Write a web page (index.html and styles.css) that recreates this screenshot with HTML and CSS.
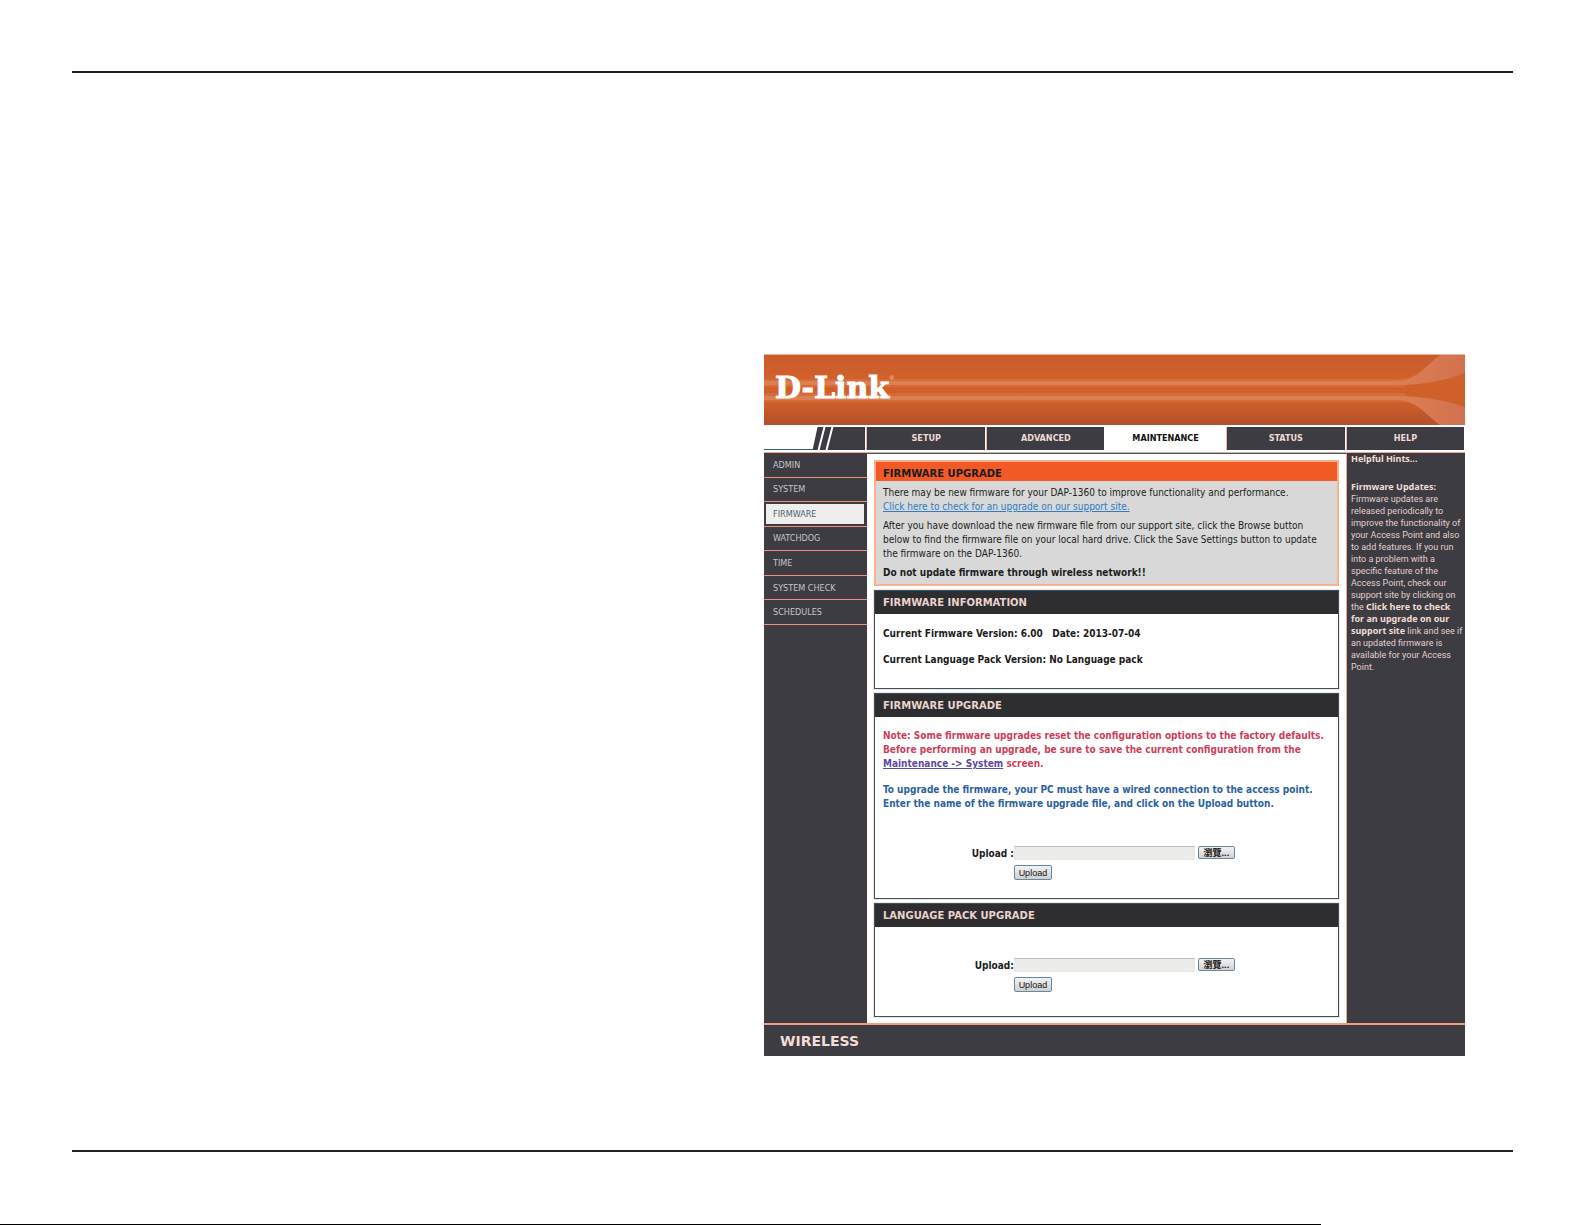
FILE: index.html
```html
<!DOCTYPE html>
<html lang="en">
<head>
  <meta charset="UTF-8">
  <meta name="viewport" content="width=device-width, initial-scale=1.0">
  <title>D-Link - Firmware Upgrade</title>
  <link rel="stylesheet" href="styles.css">
</head>
<body>
  <div class="sheet">
    <div class="panel">
      <header class="banner">
        <svg class="streaks" viewBox="0 0 701 70" preserveAspectRatio="none" aria-hidden="true">
          <defs>
            <linearGradient id="flare" x1="0" x2="1" y1="0" y2="0">
              <stop offset="0.9" stop-color="#dc8053"/>
              <stop offset="1" stop-color="#d2714f"/>
            </linearGradient>
          </defs>
          <path fill="#dc8053" opacity="0.4" d="M0 24H636C650 23 656 19 662 14L640 32H0ZM0 38H640L662 56C656 51 650 47 636 47H0Z"/>
          <path fill="url(#flare)" d="M0 26H632C652 26 660 12 676 0H701V18C680 26 660 30 632 30H0Z"/>
          <path fill="url(#flare)" d="M0 41H632C660 41 680 45 701 52V70H676C660 58 652 45 632 45H0Z"/>
        </svg>
        <div class="logo">D-Link<sup>®</sup></div>
      </header>
      <nav class="tabs">
        <div class="corner">
          <svg viewBox="0 0 102 23" preserveAspectRatio="none" aria-hidden="true">
            <path fill="#3d3c42" d="M54 0H102V23H49Z"/>
            <path stroke="#fff" stroke-width="2" d="M61 0L55 23M69 0L63 23"/>
            <path stroke="#2f5f73" d="M0 22.500H50"/>
          </svg>
        </div>
        <a href="#setup">SETUP</a>
        <a href="#advanced">ADVANCED</a>
        <a href="#maintenance" class="active">MAINTENANCE</a>
        <a href="#status">STATUS</a>
        <a href="#help">HELP</a>
      </nav>
      <div class="columns">
        <nav class="side">
          <ul>
            <li><a href="#admin">ADMIN</a></li>
            <li><a href="#system">SYSTEM</a></li>
            <li><a href="#firmware" class="active">FIRMWARE</a></li>
            <li><a href="#watchdog">WATCHDOG</a></li>
            <li><a href="#time">TIME</a></li>
            <li><a href="#check">SYSTEM CHECK</a></li>
            <li><a href="#schedules">SCHEDULES</a></li>
          </ul>
        </nav>
        <main>
          <section class="box intro">
            <h1>FIRMWARE UPGRADE</h1>
            <p>There may be new firmware for your DAP-1360 to improve functionality and performance.<br>
              <a href="#support">Click here to check for an upgrade on our support site.</a></p>
            <p>After you have download the new firmware file from our support site, click the Browse button<br>
              below to find the firmware file on your local hard drive. Click the Save Settings button to update<br>
              the firmware on the DAP-1360.</p>
            <p><b>Do not update firmware through wireless network!!</b></p>
          </section>
          <section class="box info">
            <h2>FIRMWARE INFORMATION</h2>
            <p>Current Firmware Version: 6.00 &nbsp; Date: 2013-07-04</p>
            <p>Current Language Pack Version: No Language pack</p>
          </section>
          <section class="box upgrade">
            <h2>FIRMWARE UPGRADE</h2>
            <p class="note">Note: Some firmware upgrades reset the configuration options to the factory defaults.<br>
              Before performing an upgrade, be sure to save the current configuration from the<br>
              <a href="#system">Maintenance -&gt; System</a> screen.</p>
            <p class="tip">To upgrade the firmware, your PC must have a wired connection to the access point.<br>
              Enter the name of the firmware upgrade file, and click on the Upload button.</p>
            <form class="upload">
              <label for="fwFile">Upload :</label>
              <div class="file">
                <input type="text" id="fwFile">
                <button type="button" class="browse">瀏覽...</button>
              </div>
              <button type="button" class="send">Upload</button>
            </form>
          </section>
          <section class="box language">
            <h2>LANGUAGE PACK UPGRADE</h2>
            <form class="upload">
              <label for="langFile">Upload:</label>
              <div class="file">
                <input type="text" id="langFile">
                <button type="button" class="browse">瀏覽...</button>
              </div>
              <button type="button" class="send">Upload</button>
            </form>
          </section>
        </main>
        <aside class="hints">
          <h3>Helpful Hints...</h3>
          <h3>Firmware Updates:</h3>
          <p>Firmware updates are<br>released periodically to<br>improve the functionality of<br>your Access Point and also<br>to add features. If you run<br>into a problem with a<br>specific feature of the<br>Access Point, check our<br>support site by clicking on<br>the <b>Click here to check<br>for an upgrade on our<br>support site</b> link and see if<br>an updated firmware is<br>available for your Access<br>Point.</p>
        </aside>
      </div>
      <footer>WIRELESS</footer>
    </div>
  </div>
  <div class="edge"></div>
</body>
</html>
```
FILE: styles.css
```css
* { box-sizing: border-box; }
body { margin: 0; min-height: 100vh; display: flex; flex-direction: column; background: #fff; color: #1c1c20; font: 10px/14px "DejaVu Sans Condensed", "DejaVu Sans", sans-serif; }
h1, h2, h3, p, ul { margin: 0; padding: 0; }
a { color: inherit; text-decoration: none; }

.sheet { flex: 1; margin: 71px 72px 72px; padding: 281px 0 94px; border-top: 2px solid #231f20; border-bottom: 2px solid #231f20; display: grid; grid-template-columns: 692fr 701fr 48fr; align-items: start; }
.edge { width: calc(100% * 5 / 6); height: 1px; background: #000; }
.panel { grid-column: 2; }

.banner { position: relative; height: 71px; border-top: 1px solid #f3b49a; background: linear-gradient(#c95b2b, #d1602a 30%, #cf602a 65%, #b5502c); }
.streaks { position: absolute; left: 0; top: 0; width: 100%; height: 100%; }
.logo { position: relative; padding: 15px 11px; color: #fff; font: bold 30px/36px "DejaVu Serif", serif; -webkit-text-stroke: 1px #fff; }
.logo sup { font: 6px/6px "Noto Sans", sans-serif; vertical-align: 18px; color: #f0b9a0; -webkit-text-stroke: 0; }

.tabs { display: grid; grid-template-columns: 101fr 119fr 118fr 119fr 119fr 118fr; gap: 1px; padding: 2px 1px 2px 0; border-bottom: 1px solid #f0a58f; }
.tabs a, .corner { height: 23px; background: #3d3c42; color: #eedad6; font: bold 9px/23px "DejaVu Sans Condensed", sans-serif; text-align: center; }
.tabs a { border-left: 1px solid #f0b5a5; }
.tabs .active { background: #fff; color: #111; border-color: #fff; }
.corner { background: #fff; }
.corner svg { display: block; width: 100%; height: 100%; }

.columns { display: grid; grid-template-columns: minmax(0, 103fr) minmax(0, 480fr) minmax(0, 118fr); min-height: 571px; border-bottom: 2px solid #f09a84; }
.side { background: #3d3c42; color: #c9c4c8; font-size: 9px; }
.side ul { display: grid; grid-auto-rows: 1fr; height: 172px; list-style: none; }
.side li { display: flex; border-bottom: 1px solid #f08f78; }
.side a { flex: 1; display: flex; align-items: center; padding-left: 9px; }
.side .active { margin: 2px 3px 2px 2px; padding-left: 7px; background: #efeeed; color: #4f6272; }

main { display: flex; flex-direction: column; gap: 4px; padding: 6px 7px 6px; border-top: 1px solid #2f5f73; border-right: 1px solid #f0a58f; }
.box { border: 1px solid #2f5465; outline: 1px solid #fbe3dc; }
.box h1, .box h2 { padding: 0 8px; font: bold 10px/23px "DejaVu Sans", sans-serif; }
.box h2 { background: #2e2d30; color: #ead3ce; }
.box p { padding: 0 8px; white-space: nowrap; }
.intro { height: 126px; border: 2px solid #f9b08c; background: #d8d8d8; outline: none; }
.box.intro h1 { padding: 4px 7px 0; margin-bottom: 5px; background: #f15a24; line-height: 15px; }
.intro p { padding: 0 7px; margin-bottom: 5px; }
.intro a { color: #2f7cc0; text-decoration: underline; }
.info, .note, .tip { font-weight: bold; }
.info { height: 99px; }
.info p { margin-top: 12px; }
.info h2 + p { margin-top: 13px; }
.upgrade { height: 206px; }
.note { margin-top: 12px; color: #cd3f58; }
.note a { color: #5b4aa0; text-decoration: underline; }
.tip { margin-top: 12px; color: #2b62a0; }

.upload { display: grid; grid-template-columns: 30% 1fr; row-gap: 4px; margin-top: 35px; }
.language { height: 114px; }
.language .upload { margin-top: 31px; }
.upload label { text-align: right; font-weight: bold; line-height: 15px; }
.file { display: flex; gap: 3px; height: 14px; }
.file input { width: 181px; height: 14px; padding: 0 2px; border: 1px solid #e6e6e6; border-top-color: #b5bcc4; background: #ebebea; font: 9px "DejaVu Sans Condensed", sans-serif; }
.upload button { padding: 0; border: 1px solid #5f8ba8; border-radius: 2px; background: linear-gradient(#f4f2f2, #d3cfd1); color: #111; }
.browse { width: 37px; height: 13px; font: bold 9px/10px "Noto Sans", "Noto Sans CJK TC", sans-serif; }
.upload .send { grid-column: 2; width: 38px; height: 15px; font: 9px/12px "Liberation Sans", sans-serif; }

.hints { padding: 0 2px 0 4px; background: #3d3c42; color: #e3cfcc; font: 9px/12px Roboto, sans-serif; white-space: nowrap; }
.hints h3, .hints b { font: bold 9px/12px "Noto Sans", sans-serif; color: #f3dcd6; }
.hints h3 { margin-bottom: 16px; }
.hints h3 + h3 { margin-bottom: 0; }

footer { height: 31px; padding-left: 16px; background: #3d3c42; color: #f3dcd6; font: bold 14px/32px "DejaVu Sans", sans-serif; }

@media (max-width: 1200px) { .sheet { grid-template-columns: 1fr; margin: 40px 20px; padding: 40px 0; } .panel { grid-column: 1; min-width: 680px; } }
```
